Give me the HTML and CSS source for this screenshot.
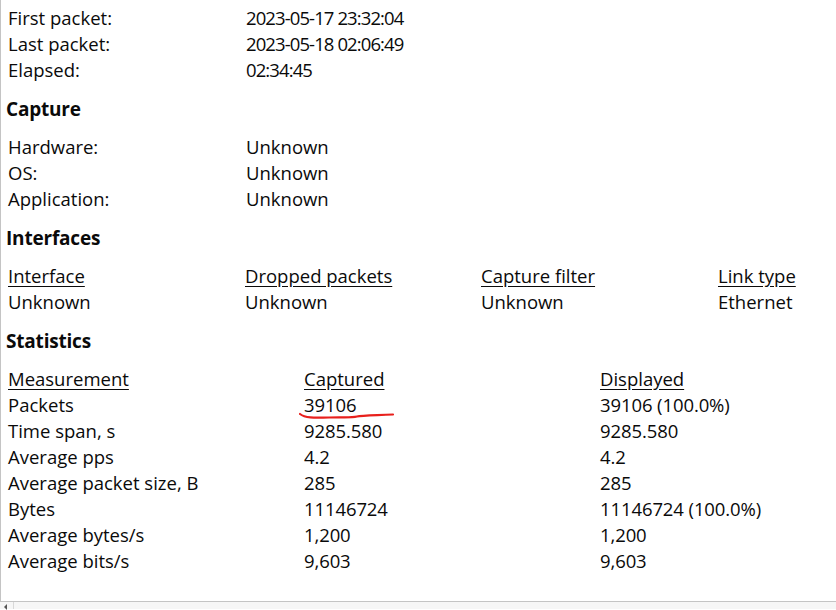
FILE: index.html
```html
<!DOCTYPE html>
<html>
<head>
<meta charset="utf-8">
<link rel="stylesheet" href="styles.css">
</head>
<body>
<div class="viewport">
  <div class="content">
    <div class="kv">
      <div>First packet:</div><div class="num">2023-05-17 23:32:04</div>
      <div>Last packet:</div><div class="num">2023-05-18 02:06:49</div>
      <div>Elapsed:</div><div class="num">02:34:45</div>
    </div>
    <h2 class="heading">Capture</h2>
    <div class="kv">
      <div>Hardware:</div><div>Unknown</div>
      <div>OS:</div><div>Unknown</div>
      <div>Application:</div><div>Unknown</div>
    </div>
    <h2 class="heading">Interfaces</h2>
    <div class="iface">
      <div class="th">Interface</div><div class="th">Dropped packets</div><div class="th">Capture filter</div><div class="th">Link type</div>
      <div>Unknown</div><div>Unknown</div><div>Unknown</div><div>Ethernet</div>
    </div>
    <h2 class="heading">Statistics</h2>
    <div class="stats">
      <div class="th">Measurement</div><div class="th">Captured</div><div class="th">Displayed</div>
      <div>Packets</div><div class="marked num">39106<svg class="scribble" width="100" height="10" viewBox="0 0 100 10"><path d="M1 3 C 6 7, 14 7, 30 6.5 C 45 6, 52 7, 58 5.5 C 62 4.5, 70 4.5, 94 3.5" fill="none" stroke="#e8201c" stroke-width="2.2" stroke-linecap="round"/></svg></div><div class="num">39106 (100.0%)</div>
      <div>Time span, s</div><div class="num">9285.580</div><div class="num">9285.580</div>
      <div>Average pps</div><div class="num">4.2</div><div class="num">4.2</div>
      <div>Average packet size, B</div><div class="num">285</div><div class="num">285</div>
      <div>Bytes</div><div class="num">11146724</div><div class="num">11146724 (100.0%)</div>
      <div>Average bytes/s</div><div class="num">1,200</div><div class="num">1,200</div>
      <div>Average bits/s</div><div class="num">9,603</div><div class="num">9,603</div>
    </div>
  </div>
</div>
<div class="hscroll">
  <div class="arrow"></div>
  <div class="track"></div>
</div>
</body>
</html>
```
FILE: styles.css
```css
html, body {
  margin: 0;
  padding: 0;
  background: #ffffff;
}
body {
  width: 836px;
  height: 610px;
  overflow: hidden;
  font-family: "Open Sans", "Noto Sans", sans-serif;
  font-size: 18.5px;
  color: #0a0a0a;
}
.viewport {
  height: 602px;
  border-left: 1px solid #c4c4c4;
  border-bottom: 1px solid #c4c4c4;
  box-sizing: border-box;
  overflow: hidden;
}
.content {
  padding: 5px 0 0 7px;
  line-height: 26px;
}
.num {
  letter-spacing: -0.1px;
}
.kv .num {
  letter-spacing: -0.9px;
}
.kv {
  display: grid;
  grid-template-columns: 238px auto;
}
.heading {
  margin: 0 0 0 -2px;
  padding: 13px 0 12px 0;
  font-size: 19px;
  font-weight: bold;
  line-height: 26px;
  letter-spacing: -0.2px;
}
.iface {
  display: grid;
  grid-template-columns: 237px 236px 237px auto;
}
.stats {
  display: grid;
  grid-template-columns: 296px 296px auto;
}
.th {
  justify-self: start;
  text-decoration: underline;
  text-underline-offset: 3px;
}
.marked {
  position: relative;
}
.scribble {
  position: absolute;
  left: -5px;
  top: 19px;
}
.hscroll {
  height: 7px;
  display: flex;
  background: #f6f6f6;
}
.arrow {
  width: 13px;
  border-right: 1px solid #d8d8d8;
  position: relative;
}
.arrow::before {
  content: "";
  position: absolute;
  left: 4px;
  top: 2px;
  border-right: 3px solid #555;
  border-top: 3px solid transparent;
  border-bottom: 3px solid transparent;
}
.track {
  flex: 1;
}
```
